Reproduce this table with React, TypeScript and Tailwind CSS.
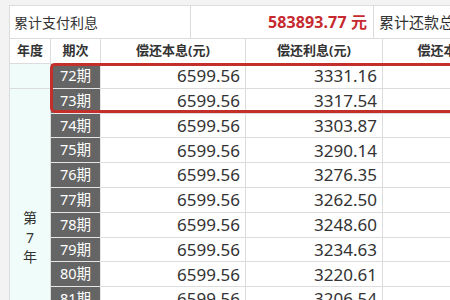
import { Fragment } from "react";

const rows = [
  { no: "72期", total: "6599.56", interest: "3331.16", principal: "3268.40" },
  { no: "73期", total: "6599.56", interest: "3317.54", principal: "3282.02" },
  { no: "74期", total: "6599.56", interest: "3303.87", principal: "3295.69" },
  { no: "75期", total: "6599.56", interest: "3290.14", principal: "3309.42" },
  { no: "76期", total: "6599.56", interest: "3276.35", principal: "3323.21" },
  { no: "77期", total: "6599.56", interest: "3262.50", principal: "3337.06" },
  { no: "78期", total: "6599.56", interest: "3248.60", principal: "3350.96" },
  { no: "79期", total: "6599.56", interest: "3234.63", principal: "3364.93" },
  { no: "80期", total: "6599.56", interest: "3220.61", principal: "3378.95" },
  { no: "81期", total: "6599.56", interest: "3206.54", principal: "3393.02" },
  { no: "82期", total: "6599.56", interest: "3192.40", principal: "3407.16" },
  { no: "83期", total: "6599.56", interest: "3178.20", principal: "3421.36" },
  { no: "84期", total: "6599.56", interest: "3163.94", principal: "3435.62" },
];

export default function App() {
  return (
    <div className="h-[300px] w-[450px] overflow-hidden bg-[#f3f3f3] pl-[9px] pt-[5px] font-['Noto_Sans','Noto_Sans_CJK_SC',sans-serif] text-[#333]">
      <div className="relative w-[620px] border-l border-t border-[#dcdcdc] bg-white">
        {/* Summary row */}
        <div className="flex h-[33px] border-b border-[#dcdcdc] text-[14px]">
          <div className="flex w-[181px] items-center border-r border-[#dcdcdc] pl-[4px]">累计支付利息</div>
          <div className="flex w-[183px] items-center justify-end border-r border-[#dcdcdc] pr-[6px] text-[16px] font-bold tracking-[0.1px] text-[#c62a2f]">
            583893.77 元
          </div>
          <div className="flex flex-1 items-center whitespace-nowrap pl-[5px] text-[15px]">累计还款总额</div>
        </div>

        {/* Header */}
        <div className="grid h-[25px] grid-cols-[41px_50px_145px_137px_144px] border-b border-[#dcdcdc] text-[13px] font-bold">
          <div className="flex items-center justify-center border-r border-[#dcdcdc]">年度</div>
          <div className="flex items-center justify-center border-r border-[#dcdcdc]">期次</div>
          <div className="flex items-center justify-center border-r border-[#dcdcdc]">偿还本息(元)</div>
          <div className="flex items-center justify-center border-r border-[#dcdcdc]">偿还利息(元)</div>
          <div className="flex items-center justify-center whitespace-nowrap border-r border-[#dcdcdc]">偿还本金(元)</div>
        </div>

        {/* Body */}
        <div className="grid auto-rows-[24.8px] grid-cols-[41px_50px_145px_137px_144px]">
          <div className="col-start-1 row-start-1 border-b border-r border-[#dcdcdc] bg-[#effcf9]" />
          <div className="col-start-1 row-span-12 row-start-2 flex flex-col items-center justify-center border-r border-[#dcdcdc] bg-[#effcf9] text-[14px] leading-[19.5px]">
            <span>第</span>
            <span>7</span>
            <span>年</span>
          </div>
          {rows.map((r) => (
            <Fragment key={r.no}>
              <div className="flex items-center justify-center border-b border-r border-[#e6e6e6] bg-[#656565] text-[14.5px] text-white">
                {r.no}
              </div>
              <div className="flex items-center justify-end border-b border-r border-[#dcdcdc] pr-[5px] text-[17px]">
                {r.total}
              </div>
              <div className="flex items-center justify-end border-b border-r border-[#dcdcdc] pr-[5px] text-[17px]">
                {r.interest}
              </div>
              <div className="flex items-center justify-end border-b border-r border-[#dcdcdc] pr-[5px] text-[17px]">
                {r.principal}
              </div>
            </Fragment>
          ))}
        </div>

        {/* Highlight */}
        <div className="absolute left-[40px] top-[56.5px] h-[50px] w-[600px] rounded-[5px] border-[3px] border-[#c3302c]" />
      </div>
    </div>
  );
}
